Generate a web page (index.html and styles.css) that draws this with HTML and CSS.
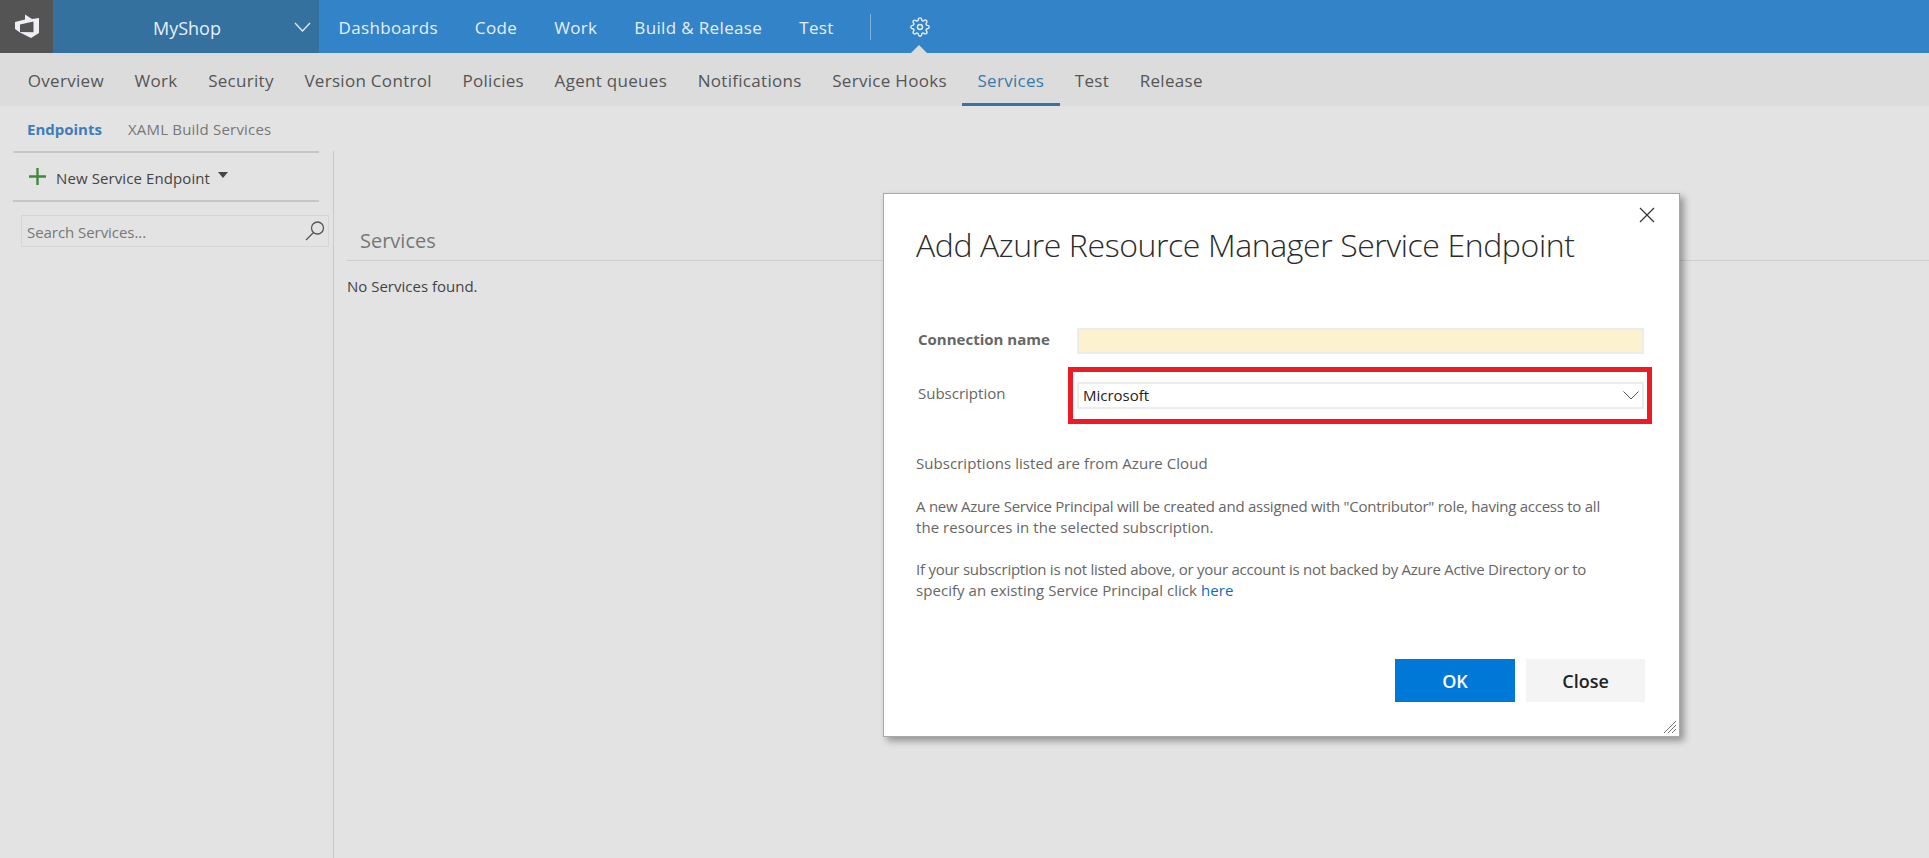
FILE: index.html
```html
<!DOCTYPE html>
<html lang="en">
<head>
<meta charset="utf-8">
<title>Services - MyShop</title>
<link rel="stylesheet" href="styles.css">
</head>
<body>
<header class="topbar">
  <div class="logo">
    <svg width="53" height="53" viewBox="0 0 53 53"><path fill-rule="evenodd" fill="#eeeef4" d="M25 14.500L32 19l7-1v15l-8 5-11-5.500L15 29v-7l10-2.500zM20 24.500V32l13.500.2V21.500z"/></svg>
  </div>
  <div class="project">
    <span class="project-name">MyShop</span>
    <svg class="project-chevron" width="17" height="10" viewBox="0 0 17 10"><path d="M1 1l7.500 8L16 1" fill="none" stroke="#dfe9f2" stroke-width="1.400"/></svg>
  </div>
  <nav class="topnav">
    <a>Dashboards</a><a>Code</a><a>Work</a><a>Build &amp; Release</a><a>Test</a>
  </nav>
  <div class="divider"></div>
  <div class="gear">
    <svg width="20" height="20" viewBox="0 0 24 24" fill="none" stroke="#e4eef7" stroke-width="1.700"><circle cx="12" cy="12" r="3"/><path d="M19.400 15a1.650 1.650 0 0 0 .33 1.820l.06.06a2 2 0 0 1 0 2.830 2 2 0 0 1-2.830 0l-.06-.06a1.650 1.650 0 0 0-1.820-.33 1.650 1.650 0 0 0-1 1.510V21a2 2 0 0 1-2 2 2 2 0 0 1-2-2v-.09A1.650 1.650 0 0 0 9 19.400a1.650 1.650 0 0 0-1.820.33l-.06.06a2 2 0 0 1-2.830 0 2 2 0 0 1 0-2.830l.06-.06a1.650 1.650 0 0 0 .33-1.820 1.650 1.650 0 0 0-1.510-1H3a2 2 0 0 1-2-2 2 2 0 0 1 2-2h.09A1.650 1.650 0 0 0 4.600 9a1.650 1.650 0 0 0-.33-1.820l-.06-.06a2 2 0 0 1 0-2.830 2 2 0 0 1 2.830 0l.06.06a1.650 1.650 0 0 0 1.820.33H9a1.650 1.650 0 0 0 1-1.510V3a2 2 0 0 1 2-2 2 2 0 0 1 2 2v.09a1.650 1.650 0 0 0 1 1.510 1.650 1.650 0 0 0 1.820-.33l.06-.06a2 2 0 0 1 2.830 0 2 2 0 0 1 0 2.830l-.06.06a1.650 1.650 0 0 0-.33 1.820V9a1.650 1.650 0 0 0 1.510 1H21a2 2 0 0 1 2 2 2 2 0 0 1-2 2h-.09a1.650 1.650 0 0 0-1.510 1z"/></svg>
    <span class="notch"></span>
  </div>
</header>
<nav class="subnav">
  <a>Overview</a><a>Work</a><a>Security</a><a>Version Control</a><a>Policies</a><a>Agent queues</a><a>Notifications</a><a>Service Hooks</a><a class="active">Services</a><a>Test</a><a>Release</a>
</nav>
<div class="tabs">
  <a class="tab-active">Endpoints</a><a class="tab">XAML Build Services</a>
</div>
<main class="content">
  <aside class="sidebar">
    <div class="toolbar">
      <svg width="17" height="17" viewBox="0 0 17 17"><path d="M8.500 0v17M0 8.500h17" stroke="#3f8a3f" stroke-width="2.400"/></svg>
      <span class="toolbar-label">New Service Endpoint</span>
      <span class="caret"></span>
    </div>
    <div class="search">
      <span class="search-text">Search Services...</span>
      <svg width="20" height="20" viewBox="0 0 20 20" fill="none" stroke="#555" stroke-width="1.300"><circle cx="12.500" cy="7" r="6"/><path d="M8.500 11.500L1 19"/></svg>
    </div>
  </aside>
  <section class="main">
    <h2 class="heading">Services</h2>
    <p class="empty">No Services found.</p>
  </section>
</main>
<div class="dialog">
  <svg class="close-x" width="16" height="16" viewBox="0 0 16 16"><path d="M1 1l14 14M15 1L1 15" stroke="#333" stroke-width="1.200"/></svg>
  <h1 class="dialog-title">Add Azure Resource Manager Service Endpoint</h1>
  <div class="row row-name">
    <label class="field-label strong">Connection name</label>
    <div class="input required"></div>
  </div>
  <div class="row row-sub">
    <label class="field-label">Subscription</label>
    <div class="highlight">
      <div class="input select">
        <span class="select-value">Microsoft</span>
        <svg width="16" height="9" viewBox="0 0 16 9"><path d="M.5.5L8 8 15.500.5" fill="none" stroke="#555" stroke-width="1"/></svg>
      </div>
    </div>
  </div>
  <div class="notes">
    <p>Subscriptions listed are from Azure Cloud</p>
    <p><span class="line tight">A new Azure Service Principal will be created and assigned with "Contributor" role, having access to all</span> <span class="line">the resources in the selected subscription.</span></p>
    <p><span class="line tight">If your subscription is not listed above, or your account is not backed by Azure Active Directory or to</span> <span class="line">specify an existing Service Principal click <a class="link">here</a></span></p>
  </div>
  <div class="actions">
    <button class="btn primary">OK</button>
    <button class="btn">Close</button>
  </div>
  <svg class="grip" width="14" height="14" viewBox="0 0 14 14"><path d="M1 13L13 1M5 13l8-8M9 13l4-4" stroke="#777" stroke-width="1"/></svg>
</div>
</body>
</html>
```
FILE: styles.css
```css
* { box-sizing: border-box; }
html, body { height: 100%; }
body {
  margin: 0;
  background: #e3e3e3;
  font-family: "Open Sans", "Noto Sans", sans-serif;
  overflow: hidden;
  display: flex;
  flex-direction: column;
}
.topbar {
  height: 53px;
  flex: none;
  display: flex;
  align-items: center;
  background: #3283c8;
  color: #e6eff7;
}
.logo { width: 53px; height: 53px; background: #545454; }
.logo svg { display: block; }
.project {
  width: 266px;
  height: 53px;
  background: #34719f;
  display: flex;
  align-items: center;
  padding: 2px 0 0 100px;
  position: relative;
}
.project-name { font-size: 18px; }
.project-chevron { position: absolute; left: 241px; top: 22px; }
.topnav { display: flex; padding: 2px 0 0 1px; }
.topnav a { padding: 0 18.500px; font-size: 17px; letter-spacing: .35px; }
.divider { width: 1px; height: 26px; background: #7fb2dc; margin-left: 18px; }
.gear {
  width: 97px;
  height: 53px;
  display: flex;
  align-items: center;
  justify-content: center;
  position: relative;
}
.notch {
  position: absolute;
  left: 40px;
  bottom: 0;
  border: 8px solid transparent;
  border-top: 0;
  border-bottom-color: #dcdcdc;
}
.subnav {
  height: 53px;
  flex: none;
  display: flex;
  padding-left: 12.500px;
  background: #dcdcdc;
  color: #555;
  font-size: 17px;
  letter-spacing: .3px;
}
.subnav a { height: 53px; padding: 0 15.300px; line-height: 56px; }
.subnav a.active { color: #3a78a8; border-bottom: 3px solid #3574a5; }
.tabs {
  height: 46px;
  flex: none;
  display: flex;
  align-items: center;
  gap: 26px;
  padding-left: 27px;
  font-size: 15px;
  color: #777;
}
.tab { letter-spacing: .2px; }
.tab-active { font-weight: 700; color: #3d7db8; }
.content { flex: 1; display: flex; min-height: 0; }
.sidebar {
  width: 334px;
  flex: none;
  padding-left: 13px;
  border-right: 1px solid #c9c9c9;
  margin-top: -1px;
}
.toolbar {
  width: 306px;
  height: 51px;
  display: flex;
  align-items: center;
  padding-left: 16px;
  border-top: 2px solid #c6c6c6;
  border-bottom: 2px solid #c6c6c6;
  color: #444;
  font-size: 15px;
  letter-spacing: .1px;
}
.toolbar-label { margin: 2px 0 0 10px; }
.caret {
  margin-left: 8px;
  margin-bottom: 4px;
  border: 5.500px solid transparent;
  border-bottom: 0;
  border-top: 6px solid #444;
}
.search {
  width: 308px;
  height: 32px;
  margin: 13px 0 0 8px;
  padding: 0 3px 0 5px;
  display: flex;
  align-items: center;
  justify-content: space-between;
  border: 1px solid #d6d6d6;
  color: #777;
  font-size: 15px;
  letter-spacing: -.05px;
}
.search-text { margin-top: 2px; }
.main { flex: 1; padding: 60px 0 0 13px; }
.heading {
  margin: 0;
  height: 49px;
  padding: 16px 0 0 13px;
  border-bottom: 1px solid #cfcfcf;
  font-size: 20px;
  line-height: 26px;
  font-weight: 400;
  color: #777;
}
.empty {
  margin: 15px 0 0;
  font-size: 15px;
  line-height: 20px;
  color: #444;
}
.dialog {
  position: absolute;
  left: 883px;
  top: 193px;
  width: 797px;
  height: 544px;
  padding: 0 34px 0 32px;
  background: #fff;
  border: 1px solid #a8a8a8;
  box-shadow: 4px 4px 7px rgba(0, 0, 0, .35);
  color: #666;
}
.close-x { position: absolute; right: 24px; top: 13px; }
.dialog-title {
  margin: 0;
  padding-top: 28px;
  height: 134px;
  font-size: 32px;
  line-height: 46px;
  font-weight: 300;
  color: #2b2b2b;
  letter-spacing: -.4px;
}
.row { display: flex; align-items: flex-start; }
.field-label { flex: none; width: 161px; padding-left: 2px; font-size: 15px; line-height: 20px; }
.strong { font-weight: 700; }
.row-name .field-label { padding-top: 1px; }
.row-sub { margin-top: 13px; }
.row-sub .field-label { padding-top: 16px; width: 152px; }
.input { flex: none; width: 567px; height: 26px; border: 2px solid #ececec; }
.required { background: #fdf2cf; }
.highlight { flex: none; width: 584px; height: 57px; padding: 10px 0 0 4px; border: 5px solid #ed1c24; }
.select {
  height: 27px;
  display: flex;
  align-items: center;
  justify-content: space-between;
  padding: 0 3px 0 4px;
  font-size: 15px;
  color: #222;
}
.select-value { margin-top: -2px; }
.notes { margin-top: 29px; font-size: 15px; line-height: 21px; letter-spacing: .05px; color: #666; width: 730px; }
.notes p { margin: 0 0 21.500px; }
.line { display: block; }
.tight { letter-spacing: -.25px; }
.link { color: #0a6ebd; }
.actions { position: absolute; right: 34px; top: 465px; display: flex; gap: 11px; }
.btn {
  width: 120px;
  height: 43px;
  border: 0;
  background: #f4f4f4;
  color: #222;
  font: 600 18px "Open Sans", "Noto Sans", sans-serif;
}
.btn:last-child { width: 119px; }
.primary { background: #0078d7; color: #fff; }
.grip { position: absolute; right: 2px; bottom: 2px; }
```
